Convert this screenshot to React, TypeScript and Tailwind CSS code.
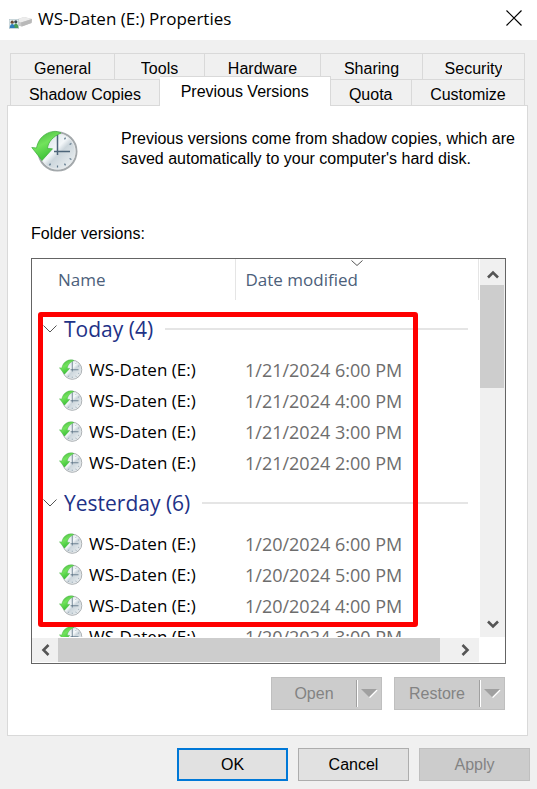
import { useId, type ReactNode } from "react";

const topTabs = [
  { label: "General", grow: "grow-[104]" },
  { label: "Tools", grow: "grow-[90]" },
  { label: "Hardware", grow: "grow-[116]" },
  { label: "Sharing", grow: "grow-[102]" },
  { label: "Security", grow: "grow-[102]" },
];

const groups = [
  {
    title: "Today (4)",
    dates: ["1/21/2024 6:00 PM", "1/21/2024 4:00 PM", "1/21/2024 3:00 PM", "1/21/2024 2:00 PM"],
  },
  {
    title: "Yesterday (6)",
    dates: ["1/20/2024 6:00 PM", "1/20/2024 5:00 PM", "1/20/2024 4:00 PM", "1/20/2024 3:00 PM"],
  },
];

function HistoryIcon({ className }: { className: string }) {
  const id = useId();
  return (
    <svg viewBox="0 0 48 42" className={className} aria-hidden="true">
      <defs>
        <linearGradient id={id + "face"} x1="0" y1="0" x2="1" y2="1">
          <stop offset="0" stopColor="#cfdbe2" />
          <stop offset="0.45" stopColor="#f3f7f9" />
          <stop offset="0.55" stopColor="#ccd6dc" />
          <stop offset="1" stopColor="#f4f7f8" />
        </linearGradient>
        <linearGradient id={id + "arrow"} x1="0" y1="0" x2="0.5" y2="1">
          <stop offset="0" stopColor="#3fae3c" />
          <stop offset="0.5" stopColor="#72e35c" />
          <stop offset="1" stopColor="#35bd32" />
        </linearGradient>
      </defs>
      <circle cx="26.5" cy="21.5" r="19" fill={`url(#${id}face)`} stroke="#a3a8ab" strokeWidth="2" />
      <circle cx="26.5" cy="21.5" r="17.6" fill="none" stroke="#e6e9eb" strokeWidth="1" />
      <path
        d="M34.500 7.600l-1 1.800M40.400 13.500l-1.800 1M40.400 29.500l-1.800-1M34.500 35.400l-1-1.800M26.500 37.500v-2M18.500 35.400l1-1.800"
        stroke="#5c7589"
        strokeWidth="1.200"
      />
      <path d="M26.500 4.500V25M23 21.500h16" fill="none" stroke="#4d6579" strokeWidth="1.500" />
      <path
        d="M30 3C26 .5 20 1 15 4 10 7 7 11 5.500 18L.8 17.500 11 30.500 21.500 18.800 16.500 18.500C17 12 22 6.500 30 3Z"
        fill={`url(#${id}arrow)`}
        stroke="#3baa39"
        strokeWidth="0.700"
      />
    </svg>
  );
}

function DriveIcon() {
  return (
    <svg viewBox="0 0 24 14" className="h-[14px] w-6" aria-hidden="true">
      <path d="M7 5L16 2 24 4 23.500 8 14 11.500 7 10Z" fill="#c9c9c9" />
      <path d="M7 5L16 2 24 4 13 7.500Z" fill="#ececec" />
      <path d="M13 7.500L24 4 23.500 8 13.500 11.500Z" fill="#b9b9b9" />
      <rect x="1.300" y="4.300" width="9.400" height="9.400" fill="#e4f1f4" stroke="#b5c4c9" strokeWidth="0.600" />
      <circle cx="4.200" cy="7.200" r="1.600" fill="#6b4a34" />
      <circle cx="7.800" cy="6.800" r="1.600" fill="#3b4650" />
      <path d="M5.400 13c0-6 5-6 5 0Z" fill="#4a9c58" />
      <path d="M1.700 13c0-5.500 5-5.500 5 0Z" fill="#2d7dbb" />
    </svg>
  );
}

function Chevron({ d, box, className, width }: { d: string; box: string; className: string; width: number }) {
  return (
    <svg viewBox={box} className={className} fill="none" stroke="currentColor" strokeWidth={width} aria-hidden="true">
      <path d={d} />
    </svg>
  );
}

function Tab({ label, className }: { label: string; className: string }) {
  return (
    <button
      role="tab"
      aria-selected={false}
      className={"flex h-[26px] basis-0 justify-center border-t border-r border-[#d9d9d9] pt-[5px] " + className}
    >
      <span className="h-[18px] overflow-hidden leading-5">{label}</span>
    </button>
  );
}

function SplitButton({ label }: { label: string }) {
  return (
    <div className="flex h-[33px] w-[111px] border border-[#bfbfbf] bg-[#ccc] text-[#838383]">
      <button disabled className="grow">
        {label}
      </button>
      <span className="my-[2px] w-[2px] border-r border-white bg-[#a0a0a0]" />
      <button disabled aria-label={label + " options"} className="flex w-[23px] items-center justify-center">
        <svg viewBox="0 0 17 9" className="h-[9px] w-[17px]" aria-hidden="true">
          <path d="M16 1L8.500 8.500" stroke="#fff" strokeWidth="1.500" />
          <path d="M0 0h16L8 8Z" fill="#a0a0a0" />
        </svg>
      </button>
    </div>
  );
}

function DialogButton({ children, className, disabled }: { children: ReactNode; className: string; disabled?: boolean }) {
  return (
    <button disabled={disabled} className={"h-[33px] w-[111px] " + className}>
      {children}
    </button>
  );
}

export default function App() {
  return (
    <div className="bg-[#f0f0f0] pb-2 font-['Liberation_Sans',Arial,sans-serif] text-base text-black">
      <header className="flex h-10 items-center bg-white pl-2">
        <div className="pt-1">
          <DriveIcon />
        </div>
        <h1 className="grow pb-[2px] pl-[6px] font-['Open_Sans','Noto_Sans',sans-serif] text-[17px] leading-6">
          WS-Daten (E:) Properties
        </h1>
        <button aria-label="Close" className="flex h-9 w-[46px] items-center justify-center">
          <Chevron box="0 0 16 16" d="M0.500 0.500l15 15M15.500 0.500l-15 15" width={1.2} className="mb-1 size-4" />
        </button>
      </header>

      <div className="pt-[13px] pr-[9px] pl-[7px]">
        <div role="tablist" className="mr-[3px] ml-[3px]">
          <div className="flex border-l border-[#d9d9d9]">
            {topTabs.map((t) => (
              <Tab key={t.label} label={t.label} className={t.grow} />
            ))}
          </div>
          <div className="flex h-[26px] border-l border-[#d9d9d9]">
            <Tab label="Shadow Copies" className="grow-[149]" />
            <button
              role="tab"
              aria-selected={true}
              className="relative -mt-[3px] -mb-px flex h-[30px] grow-[171] basis-0 justify-center border-t border-r border-[#d9d9d9] bg-white pt-[5px] leading-5"
            >
              Previous Versions
            </button>
            <Tab label="Quota" className="grow-[81]" />
            <Tab label="Customize" className="grow-[113]" />
          </div>
        </div>

        <main className="border border-[#d9d9d9] bg-white pt-[23px] pr-[21px] pb-[25px] pl-[23px]">
          <div className="flex gap-[42px]">
            <HistoryIcon className="mt-px h-[42px] w-[48px] shrink-0" />
            <p className="-mr-3 leading-5">
              Previous versions come from shadow copies, which are saved automatically to your computer's hard disk.
            </p>
          </div>

          <h2 id="folder-versions" className="mt-[52px] leading-5">
            Folder versions:
          </h2>

          <div className="relative mt-[14px] border border-[#646464] font-['Open_Sans','Noto_Sans',sans-serif]">
            <div className="flex">
              <div className="h-[378px] min-w-0 grow overflow-hidden">
                <table aria-labelledby="folder-versions" className="w-full table-fixed border-collapse text-left text-[17px] leading-5">
                  <thead className="text-[#4c607a]">
                    <tr className="h-[41px]">
                      <th className="w-[203px] border-r border-[#e5e5e5] py-0 pl-[26px] font-normal">Name</th>
                      <th className="relative border-r border-[#e5e5e5] py-0 pl-[10px] font-normal">
                        Date modified
                        <Chevron box="0 0 12 6" d="M0.500 0.500l5.500 5 5.500-5" width={1} className="absolute top-[1px] left-1/2 h-[6px] w-3 -translate-x-1/2 text-[#555]" />
                      </th>
                    </tr>
                  </thead>
                  {groups.map((g, i) => (
                    <tbody key={g.title}>
                      {i === 0 && (
                        <tr className="h-1">
                          <td colSpan={2} className="p-0" />
                        </tr>
                      )}
                      <tr className="h-[50px]">
                        <th colSpan={2} className="p-0 font-normal">
                          <button className="flex w-full items-center pr-[11px] pl-[11px] text-[21px] leading-6 text-[#1e3287]">
                            <Chevron box="0 0 14 8" d="M0.500 0.500l6.500 6.500 6.500-6.500" width={1} className="h-2 w-[14px] text-[#555]" />
                            <span className="pr-3 pl-[7px]">{g.title}</span>
                            <span className="h-[2px] grow bg-[#e5e5e5]" />
                          </button>
                        </th>
                      </tr>
                      {g.dates.map((d) => (
                        <tr key={d} className="h-[31px]">
                          <td className="p-0 pl-[27px]">
                            <span className="flex items-center gap-[6px]">
                              <HistoryIcon className="h-[21px] w-6" />
                              WS-Daten (E:)
                            </span>
                          </td>
                          <td className="p-0 pl-[10px] text-[18px] text-[#6d6d6d]">{d}</td>
                        </tr>
                      ))}
                    </tbody>
                  ))}
                </table>
              </div>
              <div className="ml-px flex w-[25px] shrink-0 flex-col bg-[#f0f0f0] text-[#555]">
                <button aria-label="Scroll up" className="flex h-[26px] items-center justify-center pt-1">
                  <Chevron box="0 0 12 9" d="M1 7.500l5-5 5 5" width={2.6} className="h-[9px] w-3" />
                </button>
                <div className="mr-px h-[103px] bg-[#cdcdcd]" />
                <div className="grow" />
                <button aria-label="Scroll down" className="flex h-[26px] items-center justify-center">
                  <Chevron box="0 0 12 9" d="M1 1.500l5 5 5-5" width={2.6} className="h-[9px] w-3" />
                </button>
              </div>
            </div>
            <div className="mt-px mr-[26px] mb-px flex h-6 bg-[#f0f0f0] text-[#555]">
              <button aria-label="Scroll left" className="flex w-[26px] items-center justify-center">
                <Chevron box="0 0 9 12" d="M7.500 1l-5 5 5 5" width={2.6} className="h-3 w-[9px]" />
              </button>
              <div className="grow bg-[#cdcdcd]" />
              <button aria-label="Scroll right" className="flex w-[39px] items-center justify-center pl-3">
                <Chevron box="0 0 9 12" d="M1.500 1l5 5-5 5" width={2.6} className="h-3 w-[9px]" />
              </button>
            </div>
            <div className="pointer-events-none absolute top-[53px] left-[6px] h-[315px] w-[380px] rounded-[3px] border-[5px] border-[#ff0000]" />
          </div>

          <div className="mt-[13px] mr-px flex justify-end gap-3">
            <SplitButton label="Open" />
            <SplitButton label="Restore" />
          </div>
        </main>
      </div>

      <footer className="mt-3 flex justify-end gap-[10px] pr-[7px]">
        <DialogButton className="border-2 border-[#0078d7] bg-[#e1e1e1]">OK</DialogButton>
        <DialogButton className="border border-[#adadad] bg-[#e1e1e1]">Cancel</DialogButton>
        <DialogButton disabled className="border border-[#bfbfbf] bg-[#ccc] text-[#838383]">
          Apply
        </DialogButton>
      </footer>
    </div>
  );
}
